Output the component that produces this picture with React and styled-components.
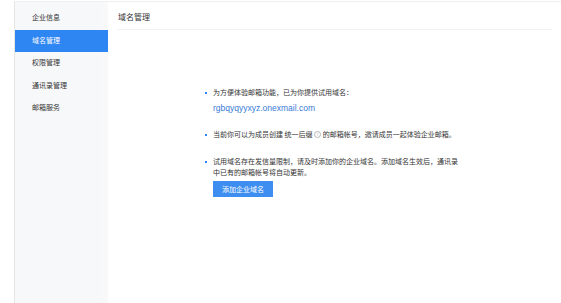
import React from 'react';
import styled, { createGlobalStyle } from 'styled-components';

const GlobalStyle = createGlobalStyle`
  html, body {
    margin: 0;
    padding: 0;
    background: #ffffff;
    font-family: "Noto Sans CJK SC", "Liberation Sans", sans-serif;
  }
`;

const menu = ['企业信息', '域名管理', '权限管理', '通讯录管理', '邮箱服务'];

function App() {
  return (
    <>
      <GlobalStyle />
      <Page>
        <Sidebar>
          {menu.map((item) => (
            <MenuItem key={item} active={item === '域名管理'}>
              {item}
            </MenuItem>
          ))}
        </Sidebar>
        <Main>
          <Header>域名管理</Header>
          <Content>
            <Tip>
              <Line>为方便体验邮箱功能，已为你提供试用域名：</Line>
              <Domain>rgbqyqyyxyz.onexmail.com</Domain>
            </Tip>
            <Tip>
              <Line>
                当前你可以为成员创建&nbsp;统一后缀 <Circle>i</Circle> 的邮箱帐号，邀请成员一起体验企业邮箱。
              </Line>
            </Tip>
            <Tip>
              <Line>
                试用域名存在发信量限制，请及时添加你的企业域名。添加域名生效后，通讯录
                <br />
                中已有的邮箱帐号将自动更新。
              </Line>
              <AddButton>添加企业域名</AddButton>
            </Tip>
          </Content>
        </Main>
      </Page>
    </>
  );
}
export default App;

const Page = styled.div`
  display: flex;
  margin-left: 14px;
  margin-top: 1px;
  height: 302px;
  border-top: 1px solid #efefef;
  border-left: 1px solid #e6e6e6;
`;

const Sidebar = styled.div`
  width: 93px;
  background: linear-gradient(to right, #f7f8fa 88%, #f9f9fa 100%);
  padding-top: 5px;
  display: flex;
  flex-direction: column;
`;

const MenuItem = styled.div`
  height: 22.5px;
  line-height: 21px;
  padding-left: 17px;
  font-size: 7px;
  color: ${(p) => (p.active ? '#ffffff' : '#333333')};
  background: ${(p) => (p.active ? '#2e86f3' : 'transparent')};
`;

const Main = styled.div`
  flex: 1;
  display: flex;
  flex-direction: column;
  padding-left: 9px;
  padding-right: 9px;
`;

const Header = styled.div`
  height: 27px;
  line-height: 29px;
  padding-left: 1px;
  font-size: 8px;
  color: #333333;
  border-bottom: 1px solid #f2f2f2;
`;

const Content = styled.div`
  padding-top: 57px;
  padding-left: 88px;
  display: flex;
  flex-direction: column;
  gap: 16px;
`;

const Tip = styled.div`
  position: relative;
  padding-left: 8px;
  &::before {
    content: '';
    position: absolute;
    left: 0;
    top: 5px;
    width: 2px;
    height: 2px;
    background: #2e86f3;
  }
`;

const Line = styled.div`
  font-size: 7px;
  line-height: 11px;
  color: #333333;
`;

const Domain = styled.div`
  margin-top: 5px;
  font-family: "Liberation Sans", sans-serif;
  font-size: 8.5px;
  color: #3a7bd5;
`;

const Circle = styled.span`
  display: inline-block;
  box-sizing: border-box;
  width: 7px;
  height: 7px;
  border: 0.6px solid #b5b5b5;
  border-radius: 50%;
  font-family: "Liberation Sans", sans-serif;
  font-size: 4.5px;
  line-height: 6px;
  text-align: center;
  color: #b5b5b5;
  vertical-align: middle;
  position: relative;
  top: -1px;
`;

const AddButton = styled.button`
  display: block;
  margin-top: 3px;
  width: 60px;
  height: 16px;
  border: none;
  background: #3d8ef0;
  color: #ffffff;
  font-family: "Noto Sans CJK SC", sans-serif;
  font-size: 7px;
  padding: 0;
`;
